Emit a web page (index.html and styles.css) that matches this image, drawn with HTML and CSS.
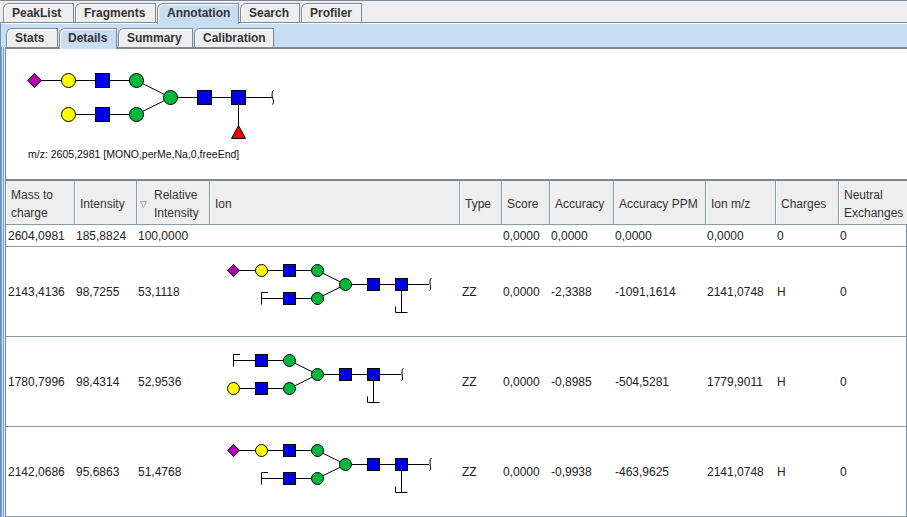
FILE: index.html
```html
<!DOCTYPE html>
<html lang="en">
<head>
<meta charset="utf-8">
<title>Annotation details</title>
<link rel="stylesheet" href="styles.css">
</head>
<body>
<div class="window">
  <div class="tabs outer">
    <div class="tab w-peak">PeakList</div>
    <div class="tab w-frag">Fragments</div>
    <div class="tab w-anno active">Annotation</div>
    <div class="tab w-search">Search</div>
    <div class="tab w-prof">Profiler</div>
  </div>
  <div class="panel">
    <div class="tabs inner">
      <div class="tab w-stats">Stats</div>
      <div class="tab w-details active">Details</div>
      <div class="tab w-summary">Summary</div>
      <div class="tab w-calib">Calibration</div>
    </div>
    <div class="content">
      <div class="canvas">
        <svg class="glycan-large" width="262" height="84" viewBox="0 0 262 84">
          <g class="bond">
            <path d="M14.5 20.5H116.5L150.5 37.5L116.5 54.5H48.5M150.5 37.5H252M218.5 37.5V70"/>
            <path d="M254 30Q251.7 31 252 35T253.5 40Q254 43 252.5 44.5"/>
          </g>
          <polygon class="purple" points="14.5,13.5 21.5,20.5 14.5,27.5 7.5,20.5"/>
          <circle class="yellow" cx="48.5" cy="20.5" r="7"/>
          <rect class="blue" x="75.5" y="13.5" width="14" height="14"/>
          <circle class="green" cx="116.5" cy="20.5" r="7"/>
          <circle class="green" cx="150.5" cy="37.5" r="7"/>
          <rect class="blue" x="177.5" y="30.5" width="14" height="14"/>
          <rect class="blue" x="211.5" y="30.5" width="14" height="14"/>
          <circle class="yellow" cx="48.5" cy="54.5" r="7"/>
          <rect class="blue" x="75.5" y="47.5" width="14" height="14"/>
          <circle class="green" cx="116.5" cy="54.5" r="7"/>
          <polygon class="red" points="218.5,65.5 225.5,78.5 211.5,78.5"/>
        </svg>
        <div class="mz">m/z: 2605,2981 [MONO,perMe,Na,0,freeEnd]</div>
      </div>
      <div class="table">
        <div class="row head">
          <div class="th">Mass to<br>charge</div>
          <div class="th">Intensity</div>
          <div class="th sorted">
            <svg class="sort" width="8" height="8" viewBox="0 0 8 8"><path d="M0.5 1.5H6.5L3.5 7.5Z"/></svg>
            <span>Relative<br>Intensity</span>
          </div>
          <div class="th">Ion</div>
          <div class="th">Type</div>
          <div class="th">Score</div>
          <div class="th">Accuracy</div>
          <div class="th">Accuracy PPM</div>
          <div class="th">Ion m/z</div>
          <div class="th">Charges</div>
          <div class="th">Neutral<br>Exchanges</div>
        </div>
        <div class="row short">
          <div class="td">2604,0981</div>
          <div class="td">185,8824</div>
          <div class="td">100,0000</div>
          <div class="td"></div>
          <div class="td"></div>
          <div class="td">0,0000</div>
          <div class="td">0,0000</div>
          <div class="td">0,0000</div>
          <div class="td">0,0000</div>
          <div class="td">0</div>
          <div class="td">0</div>
        </div>
        <div class="row tall">
          <div class="td">2143,4136</div>
          <div class="td">98,7255</div>
          <div class="td">53,1118</div>
          <div class="td ion">
            <svg width="226" height="60" viewBox="0 0 226 60">
              <g class="bond">
                <path d="M13.5 13.5H97.5L125.5 27.5L97.5 41.5H41.5M41.5 47.5V35.5H48M125.5 27.5H209M181.5 27.5V55.5M175.5 49.5V55.5H187.5"/>
                <path d="M211.5 21Q209.5 22 210 26T210.5 31Q211 33 209.5 33.5"/>
              </g>
              <polygon class="purple" points="13.5,7.5 19.5,13.5 13.5,19.5 7.5,13.5"/>
              <circle class="yellow" cx="41.5" cy="13.5" r="6"/>
              <rect class="blue" x="63.5" y="7.5" width="12" height="12"/>
              <circle class="green" cx="97.5" cy="13.5" r="6"/>
              <circle class="green" cx="125.5" cy="27.5" r="6"/>
              <rect class="blue" x="147.5" y="21.5" width="12" height="12"/>
              <rect class="blue" x="175.5" y="21.5" width="12" height="12"/>
              <rect class="blue" x="63.5" y="35.5" width="12" height="12"/>
              <circle class="green" cx="97.5" cy="41.5" r="6"/>
            </svg>
          </div>
          <div class="td zz">ZZ</div>
          <div class="td">0,0000</div>
          <div class="td">-2,3388</div>
          <div class="td">-1091,1614</div>
          <div class="td">2141,0748</div>
          <div class="td">H</div>
          <div class="td">0</div>
        </div>
        <div class="row tall">
          <div class="td">1780,7996</div>
          <div class="td">98,4314</div>
          <div class="td">52,9536</div>
          <div class="td ion">
            <svg width="226" height="60" viewBox="0 0 226 60">
              <g class="bond">
                <path d="M13.5 19.5V7.5H20M13.5 13.5H69.5L97.5 27.5L69.5 41.5H13.5M97.5 27.5H181M153.5 27.5V55.5M147.5 49.5V55.5H159.5"/>
                <path d="M183.5 21Q181.5 22 182 26T182.5 31Q183 33 181.5 33.5"/>
              </g>
              <rect class="blue" x="35.5" y="7.5" width="12" height="12"/>
              <circle class="green" cx="69.5" cy="13.5" r="6"/>
              <circle class="green" cx="97.5" cy="27.5" r="6"/>
              <rect class="blue" x="119.5" y="21.5" width="12" height="12"/>
              <rect class="blue" x="147.5" y="21.5" width="12" height="12"/>
              <circle class="yellow" cx="13.5" cy="41.5" r="6"/>
              <rect class="blue" x="35.5" y="35.5" width="12" height="12"/>
              <circle class="green" cx="69.5" cy="41.5" r="6"/>
            </svg>
          </div>
          <div class="td zz">ZZ</div>
          <div class="td">0,0000</div>
          <div class="td">-0,8985</div>
          <div class="td">-504,5281</div>
          <div class="td">1779,9011</div>
          <div class="td">H</div>
          <div class="td">0</div>
        </div>
        <div class="row tall">
          <div class="td">2142,0686</div>
          <div class="td">95,6863</div>
          <div class="td">51,4768</div>
          <div class="td ion">
            <svg width="226" height="60" viewBox="0 0 226 60">
              <g class="bond">
                <path d="M13.5 13.5H97.5L125.5 27.5L97.5 41.5H41.5M41.5 47.5V35.5H48M125.5 27.5H209M181.5 27.5V55.5M175.5 49.5V55.5H187.5"/>
                <path d="M211.5 21Q209.5 22 210 26T210.5 31Q211 33 209.5 33.5"/>
              </g>
              <polygon class="purple" points="13.5,7.5 19.5,13.5 13.5,19.5 7.5,13.5"/>
              <circle class="yellow" cx="41.5" cy="13.5" r="6"/>
              <rect class="blue" x="63.5" y="7.5" width="12" height="12"/>
              <circle class="green" cx="97.5" cy="13.5" r="6"/>
              <circle class="green" cx="125.5" cy="27.5" r="6"/>
              <rect class="blue" x="147.5" y="21.5" width="12" height="12"/>
              <rect class="blue" x="175.5" y="21.5" width="12" height="12"/>
              <rect class="blue" x="63.5" y="35.5" width="12" height="12"/>
              <circle class="green" cx="97.5" cy="41.5" r="6"/>
            </svg>
          </div>
          <div class="td zz">ZZ</div>
          <div class="td">0,0000</div>
          <div class="td">-0,9938</div>
          <div class="td">-463,9625</div>
          <div class="td">2141,0748</div>
          <div class="td">H</div>
          <div class="td">0</div>
        </div>
      </div>
    </div>
  </div>
</div>
</body>
</html>
```

FILE: styles.css
```css
* { box-sizing: border-box; }

html, body {
  margin: 0;
  height: 100%;
  overflow: hidden;
}

body {
  font-family: "Liberation Sans", Arial, sans-serif;
  font-size: 12px;
  color: #333;
  background: #eee;
}

.window {
  width: 907px;
  height: 517px;
  display: flex;
  flex-direction: column;
  border-top: 1px solid #7a8a99;
}

/* Tabs */
.tabs {
  display: flex;
  flex: none;
}

.tabs.outer {
  height: 21px;
  padding: 2px 0 0 3px;
}

.tabs.inner {
  height: 24px;
  padding: 5px 0 0 5px;
}

.tab {
  height: 100%;
  margin-right: 1px;
  padding-left: 8px;
  background: #eee;
  border: 1px solid #7a8a99;
  border-bottom: 0;
  border-top-left-radius: 6px;
  box-shadow: inset 1px 1px 0 #fff;
  font-weight: bold;
  line-height: 19px;
}

.tab.active {
  position: relative;
  z-index: 1;
  height: calc(100% + 2px);
  margin-bottom: -2px;
  background: #c8ddf2;
}

.w-peak { width: 71px; }
.w-frag { width: 81px; }
.w-anno { width: 82px; padding-left: 9px; }
.w-search { width: 60px; }
.w-prof { width: 61px; }
.w-stats { width: 52px; }
.w-details { width: 58px; }
.w-summary { width: 75px; }
.w-calib { width: 80px; }

/* Blue tab panel */
.panel {
  flex: 1;
  min-height: 0;
  display: flex;
  flex-direction: column;
  background: #c8ddf2;
  border-top: 1px solid #7a8a99;
  border-left: 1px solid #6f8cb8;
  box-shadow: inset 0 1px 0 #fff;
}

.content {
  flex: 1;
  min-height: 0;
  margin-left: 4px;
  background: #fff;
  border-top: 2px solid #7a8a99;
  border-left: 1px solid #7a8a99;
  box-shadow: -1px 0 0 #dfe9f5, -2px 0 0 #7ea3d5, -3px 0 0 #c8ddf2, -4px 0 0 #7ea3d5;
  display: flex;
  flex-direction: column;
}

/* Glycan canvas */
.canvas {
  flex: none;
  height: 130px;
  padding: 11px 0 0 14px;
}

.glycan-large {
  display: block;
}

.mz {
  margin: 4px 0 0 8px;
  font-size: 10.5px;
  line-height: 12px;
  color: #111;
}

.bond {
  fill: none;
  stroke: #000;
  stroke-width: 1;
}

.blue, .yellow, .green, .purple, .red {
  stroke: #000;
  stroke-width: 1;
}

.blue { fill: #0000e6; }
.yellow { fill: #ffff00; }
.green { fill: #00b83c; }
.purple { fill: #b400b4; }
.red { fill: #f00000; }

/* Table */
.table {
  flex: 1;
  min-height: 0;
  display: flex;
  flex-direction: column;
  border-top: 2px solid #7a8a99;
}

.row {
  display: grid;
  grid-template-columns: 69px 62px 73px 250px 42px 48px 64px 92px 70px 63px 1fr;
  flex: none;
  border-bottom: 1px solid #8b9aa5;
  border-right: 1px solid #7a94b8;
}

.row.head {
  height: 44px;
  border-right: 0;
  background: #eee;
}

.row.short { height: 22px; }
.row.tall { height: 90px; }

.th {
  display: flex;
  align-items: center;
  padding: 2px 0 0 5px;
  border-right: 1px solid #8b9aa5;
  box-shadow: inset 1px 0 0 #fff;
  line-height: 18px;
  color: #333;
  white-space: nowrap;
}

.th:last-child { border-right: 0; }

.th.sorted { padding-left: 3px; gap: 6px; }

.sort {
  fill: none;
  stroke: #aaa;
  flex: none;
}

.td {
  display: flex;
  align-items: center;
  padding-left: 1px;
  color: #222;
  white-space: nowrap;
}

.td:first-child,
.td.zz { padding-left: 2px; }

.td.ion {
  align-items: flex-start;
  padding: 10px 0 0 10px;
}

.td.ion svg { display: block; }
```
